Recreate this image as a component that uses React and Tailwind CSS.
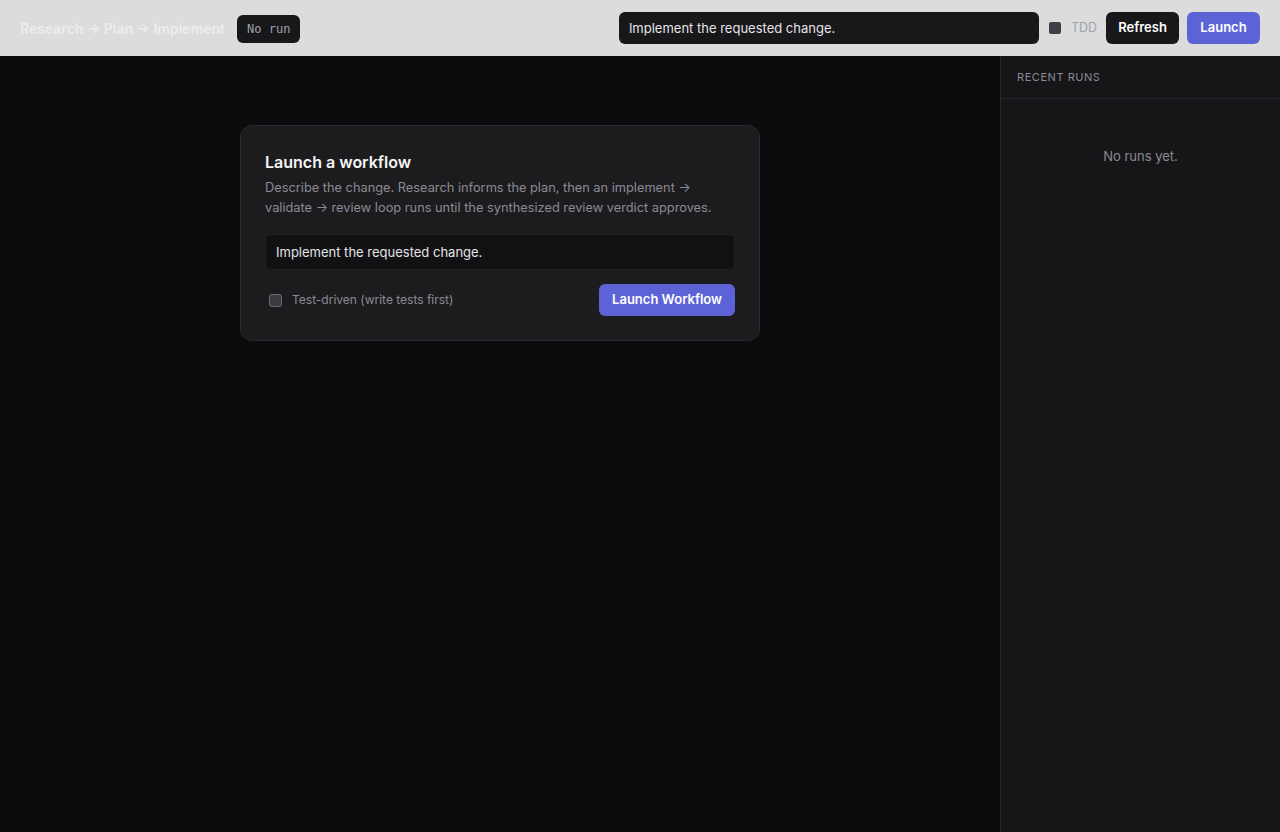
import { useState } from "react";

export default function App() {
  const [task, setTask] = useState("Implement the requested change.");
  const [tdd, setTdd] = useState(false);

  return (
    <div
      className="h-[832px] w-full flex flex-col bg-[#0c0c0e] text-[#e4e4e7] overflow-hidden"
      style={{ fontFamily: "Inter, 'Noto Sans', sans-serif" }}
    >
      {/* top bar */}
      <header className="h-14 shrink-0 flex items-center justify-between px-5 bg-[#dcdcdc]">
        <div className="flex items-center gap-3 pt-px">
          <div className="text-sm font-semibold text-[#ededed]">Research → Plan → Implement</div>
          <span className="px-2.5 h-7 flex items-center rounded-md bg-[#18181b] text-[12px] text-[#a1a1aa]" style={{ fontFamily: "'DejaVu Sans Mono', monospace" }}>
            No run
          </span>
        </div>
        <div className="flex items-center gap-2">
          <input
            value={task}
            onChange={(e) => setTask(e.target.value)}
            className="w-[420px] h-8 px-2.5 rounded-md bg-[#18181b] text-[13px] text-[#e4e4e7] outline-none"
          />
          <label className="flex items-center gap-2.5 ml-0.5 mr-px text-[12.5px] text-[#9ca3af]">
            <span className="w-3 h-3 rounded-[2px] bg-[#3f3f46]" />
            TDD
          </label>
          <button className="h-8 w-[73px] rounded-md bg-[#18181b] text-[13px] font-semibold text-white">Refresh</button>
          <button className="h-8 w-[73px] rounded-md bg-[#5c63d6] text-[13px] font-semibold text-white">Launch</button>
        </div>
      </header>

      <div className="flex-1 flex min-h-0">
        {/* main area */}
        <main className="flex-1 pt-[69px] pl-[240px]">
          <div className="w-[520px] rounded-xl border border-[#2a2a2e] bg-[#1c1c1f] p-6">
            <h2 className="text-base font-semibold text-[#f4f4f5] leading-6">Launch a workflow</h2>
            <p className="mt-1 text-[12.8px] leading-[19.5px] text-[#8b8b93]">
              Describe the change. Research informs the plan, then an implement → validate → review loop runs until the synthesized review verdict approves.
            </p>
            <input
              value={task}
              onChange={(e) => setTask(e.target.value)}
              className="mt-[17px] w-full h-9 px-2.5 rounded-md border border-[#232326] bg-[#111113] text-[13px] text-[#e4e4e7] outline-none"
            />
            <div className="mt-3.5 flex items-center justify-between">
              <label className="flex items-center gap-2.5 pl-1 text-[12px] text-[#8b8b93] cursor-pointer">
                <span
                  onClick={() => setTdd(!tdd)}
                  className="w-[13px] h-[13px] rounded-[3px] border border-[#6b6b73] bg-[#3a3a3f]"
                />
                Test-driven (write tests first)
              </label>
              <button className="h-8 px-[13px] rounded-md bg-[#5c63d6] text-[13px] font-semibold text-white">
                Launch Workflow
              </button>
            </div>
          </div>
        </main>

        {/* recent runs */}
        <aside className="w-[280px] shrink-0 border-l border-[#26262a] bg-[#161618] flex flex-col">
          <div className="h-[43px] flex items-center px-4 border-b border-[#26262a] text-[11px] tracking-wider uppercase text-[#8b8b93]">
            Recent runs
          </div>
          <div className="pt-[48px] text-center text-[13px] text-[#8b8b93]">No runs yet.</div>
        </aside>
      </div>
    </div>
  );
}
